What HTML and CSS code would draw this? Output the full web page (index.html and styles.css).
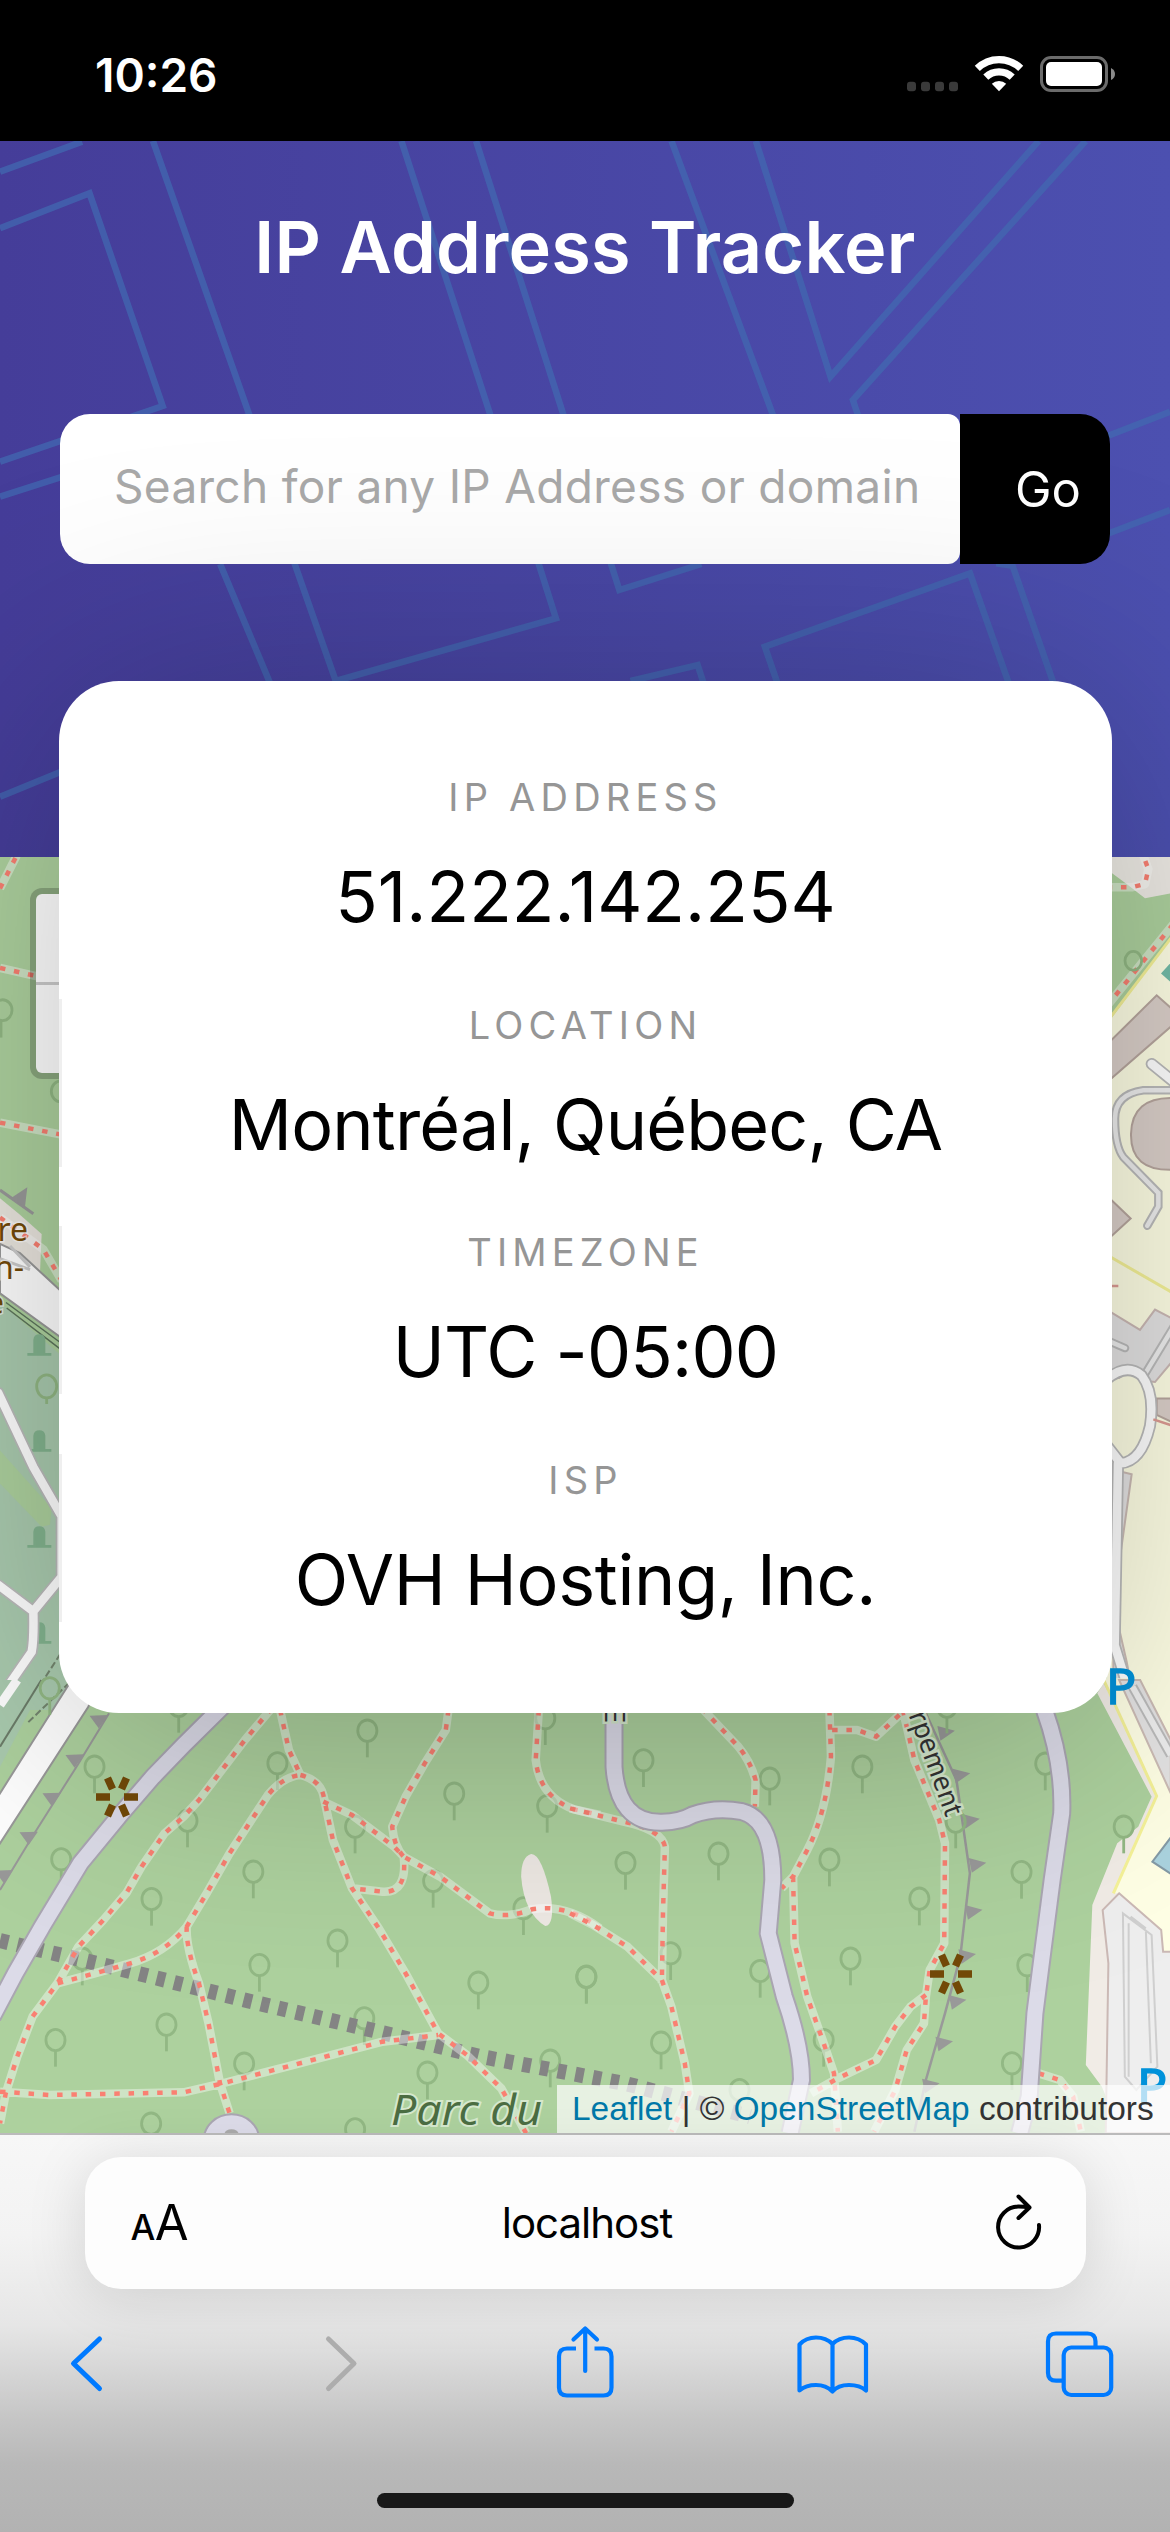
FILE: index.html
```html
<!DOCTYPE html>
<html lang="en">
<head>
<meta charset="utf-8">
<title>IP Address Tracker</title>
<link rel="stylesheet" href="styles.css">
</head>
<body>
<div class="phone">
  <div class="status">
    <span class="time">10:26</span>
    <svg class="status-icons" width="210" height="40" viewBox="906 54 210 40">
      <g fill="#3a3a3a"><rect x="907" y="81.700" width="9" height="9.500" rx="3"/><rect x="921" y="81.700" width="9" height="9.500" rx="3"/><rect x="935" y="81.700" width="9" height="9.500" rx="3"/><rect x="949" y="81.700" width="9" height="9.500" rx="3"/></g>
      <g fill="none" stroke="#fff" stroke-width="7.200"><path d="M977.300 68.400A31 31 0 0 1 1020.700 68.400"/><path d="M985.800 77.200A19 19 0 0 1 1012.200 77.200"/></g>
      <path d="M999 91.200L991.800 83.800A10.500 10.500 0 0 1 1006.200 83.800Z" fill="#fff"/>
      <rect x="1041.500" y="57.500" width="65" height="33" rx="9.500" fill="none" stroke="#6b6b6b" stroke-width="3"/>
      <rect x="1046" y="62" width="56" height="24" rx="5" fill="#fff"/>
      <path d="M1111 68Q1115 70 1115 74T1111 80Z" fill="#8a8a8a"/>
    </svg>
  </div>

  <main class="app">
    <header class="hero">
      <svg class="hero-lines" viewBox="0 423 1568 2148" preserveAspectRatio="none">
        <path d="M0 515L110 425M0 685L120 580L218 1218L0 1385M205 423L335 1250L0 1490M538 423L722 1692L745 1855L450 2043L395 1692L330 1240M638 423L830 1770L940 1692M295 1692L362 2050M900 423L1040 1270M1013 423L1113 1130L1392 423M1455 423L1143 1200L1152 1260M1335 1690L1357 1697L1412 2050M1042 2050L1025 1940L1300 1720L1352 2050M845 2043L935 1995L943 2050M1480 1312L1568 1235M1480 1605L1568 1530M0 2390L85 2312"/>
      </svg>
      <h1>IP Address Tracker</h1>
      <form class="search">
        <div class="field"><span>Search for any IP Address or domain</span></div>
        <button type="button"><span>Go</span></button>
      </form>
    </header>

    <section class="map">
      <svg viewBox="0 857 1170 1276" width="1170" height="1276">
        <defs>
          <g id="tree"><ellipse rx="25" ry="32"/><path d="M0 32V80"/></g>
          <path id="tooth" d="M-24 -18L24 -20L0 20Z"/>
          <path id="flag" d="M-20 -22L26 -8L-12 22Z"/>
          <path id="tomb" d="M-36 17V12H-18V-12Q-16 -22 0 -22T18 -12V12H36V17Z"/>
          <g id="spring"><path d="M-21 0H-7M7 0H21M-9.500 -19L-4.500 -8M9.500 -19L4.500 -8M-9.500 19L-4.500 8M9.500 19L4.500 8" stroke="#734a08" stroke-width="7.500"/></g>
        </defs>
        <rect y="857" width="1170" height="1276" fill="#add19e"/>

        <g class="tile" transform="translate(0 850) scale(.33333 .5485)">
          <defs>
            <path id="lane-w" d="M-5 990L100 1125L185 1215V1325L100 1388L-5 1340M100 1388Q102 1440 95 1462L-5 1550"/>
            <path id="foot-w" d="M0 70L50 10M0 215L95 228L185 240M0 497L185 519M0 670L130 728L185 785"/>
          </defs>
          <path d="M0 810L200 915V1568H0Z" fill="#aacbaf"/>
          <path d="M0 1095L155 1200L150 1230L125 1234L0 1155Z" fill="#add19e"/>
          <path d="M0 805L190 890V925L0 825Z" fill="#add19e"/>
          <path d="M0 635L60 665L125 700L120 770L0 740Z" fill="#eae6df"/>
          <path d="M0 718L60 735L190 808V892L0 808Z" fill="#fff" stroke="#999" stroke-width="2"/>
          <path d="M0 745L90 765M30 722L90 760" stroke="#ccc" stroke-width="3"/>
          <path d="M18 825L190 902M20 835L190 914" stroke="#5d755c" stroke-width="1.500"/>
          <g class="tombs"><use href="#tomb" x="118" y="905"/><use href="#tomb" x="118" y="1080"/><use href="#tomb" x="118" y="1255"/><use href="#tomb" x="118" y="1430"/></g>
          <use href="#lane-w" class="casing"/><use href="#lane-w" class="lane"/>
          <path d="M72 1568L185 1462M85 1590L205 1520" stroke="#73856e" stroke-width="2" stroke-dasharray="7 3"/>
          <use href="#foot-w" class="foot"/><use href="#foot-w" class="dots"/>
          <path d="M0 620L100 663" stroke="#999" stroke-width="3"/><path d="M30 636L82 615L75 650Z" fill="#999"/>
          <g class="trees"><ellipse cx="140" cy="978" rx="30" ry="21"/><path d="M140 999V1010"/><ellipse cx="8" cy="292" rx="28" ry="19"/><path d="M3 311V342"/><ellipse cx="182" cy="440" rx="28" ry="19"/></g>
        </g>
        <g class="place" text-anchor="end"><text x="28" y="1241">re</text><text x="24" y="1279">n-</text><text x="4" y="1314">e</text></g>

        <g class="tile" transform="translate(1060 850) scale(.33333 .5485)">
          <defs>
            <path id="foot-e" d="M140 68H215L255 62L265 35L250 10M140 285L340 135"/>
            <path id="lane-e" d="M340 438H250Q165 445 165 490Q165 540 190 560L295 625V650L262 685M250 960L340 870M145 895L195 908"/>
            <path id="drive-e" d="M275 390L340 422M140 965Q200 935 245 958Q285 990 270 1050Q245 1115 182 1118L140 1085M174 1118L164 1450L235 1590"/>
          </defs>
          <path d="M140 0H340V1568H140Z" fill="#ffffe5"/>
          <path d="M140 0H340V155L140 318Z" fill="#add19e"/>
          <path d="M140 0H340V78L255 88L200 62L140 35Z" fill="#eeebe5"/>
          <path d="M140 314L340 155M140 738L340 808" stroke="#f5f298" stroke-width="3"/>
          <use href="#foot-e" class="foot"/><use href="#foot-e" class="dots"/>
          <g class="trees"><ellipse cx="220" cy="202" rx="25" ry="17"/></g>
          <g fill="#dbd0ca" stroke="#b8a79f" stroke-width="2"><path d="M140 355L290 265L340 292V318L140 424Z"/><path d="M340 452Q215 450 213 518T340 583Z"/><path d="M140 630L212 672L140 712Z"/><path d="M290 1000H340V1044L290 1030Z"/></g>
          <path d="M140 838L240 875L285 838L340 855V930L285 970L140 960Z" fill="#e4e3e3" stroke="#cbb9b5" stroke-width="2"/>
          <path d="M160 1130L215 1138L180 1290L170 1400L200 1480L235 1590H160Z" fill="#e4e3e3" stroke="#ccbcb5" stroke-width="2"/>
          <ellipse cx="205" cy="1035" rx="62" ry="78" fill="#ffffe5"/>
          <use href="#lane-e" class="casing thin"/><use href="#lane-e" class="lane thin"/>
          <use href="#drive-e" class="casing"/><use href="#drive-e" class="lane"/>
          <path d="M340 200L303 225L340 245Z" fill="#73bca8"/><path d="M145 795H175M280 1038L340 1050" stroke="#dd9c94" stroke-width="2.500"/>
        </g>

        <g class="tile" transform="translate(0 1680) scale(.38265 .33333)">
          <defs>
            <path id="foot-sw" d="M710 85L640 180L600 240L520 360L480 410L430 460L370 560L330 640L270 720L205 800L150 910L85 1010L45 1130L15 1240L0 1330M732 90L755 210L785 285Q740 290 700 345L600 520L540 640L488 740Q430 820 340 850T150 910M785 285Q835 300 845 345L870 480L920 625L990 745L1060 880L1145 1060L1220 1125L1310 1225L1375 1360M845 365L920 405L1030 500L1055 530L1150 590L1280 700Q1330 715 1390 688Q1480 670 1568 745M1172 90L1165 150L1110 250L1060 350L1025 440Q1030 500 1055 530Q1065 640 1000 635L920 625M488 740Q485 800 520 910L545 1030L575 1210L600 1300M0 1235L130 1245L480 1237L575 1212L750 1160L1000 1085L1145 1065M1408 90L1400 240Q1410 350 1500 388L1568 405"/>
            <path id="road-sw" d="M590 70L480 195L400 290L310 410L210 550L110 740L40 880L-20 1010"/>
          </defs>
          <path d="M0 0H120L0 260Z" fill="#aacbaf"/>
          <path d="M108 0L0 200" stroke="#6c7c69" stroke-width="2"/><path d="M45 0L0 75" stroke="#fff" stroke-width="9"/>
          <path d="M190 -5L240 60L230 82L-10 508V358Z" fill="#fff" stroke="#999" stroke-width="2"/>
          <path d="M285 100L200 260L90 460L0 630" stroke="#999" stroke-width="2"/>
          <g fill="#999"><use href="#tooth" x="258" y="125"/><use href="#tooth" x="195" y="243"/><use href="#tooth" x="135" y="358"/><use href="#tooth" x="75" y="475"/><use href="#tooth" x="10" y="590"/></g>
          <g class="trees"><use href="#tree" x="130" y="25"/><use href="#tree" x="467" y="78"/><use href="#tree" x="960" y="152"/><use href="#tree" x="725" y="250"/><use href="#tree" x="1187" y="341"/><use href="#tree" x="247" y="260"/><use href="#tree" x="490" y="422"/><use href="#tree" x="928" y="440"/><use href="#tree" x="1430" y="378"/><use href="#tree" x="1425" y="115"/><use href="#tree" x="160" y="538"/><use href="#tree" x="662" y="575"/><use href="#tree" x="396" y="657"/><use href="#tree" x="1132" y="603"/><use href="#tree" x="1368" y="685"/><use href="#tree" x="882" y="782"/><use href="#tree" x="678" y="855"/><use href="#tree" x="1250" y="908"/><use href="#tree" x="1532" y="891"/><use href="#tree" x="435" y="1034"/><use href="#tree" x="145" y="1080"/><use href="#tree" x="638" y="1151"/><use href="#tree" x="952" y="1015"/><use href="#tree" x="1117" y="1178"/><use href="#tree" x="1438" y="1142"/><use href="#tree" x="395" y="1331"/><use href="#tree" x="928" y="1348"/><use href="#tree" x="215" y="836"/></g>
          <path d="M0 782L300 863L650 963L1000 1058L1250 1128L1640 1212L1960 1310" stroke="#848484" stroke-width="15" stroke-dasharray="8.500 9.400"/>
          <path d="M1388 522Q1415 520 1440 650Q1450 735 1425 738Q1370 700 1362 590Q1362 530 1388 522Z" fill="#eee9e4"/>
          <use href="#foot-sw" class="foot"/><use href="#foot-sw" class="dots"/>
          <use href="#road-sw" class="road"/><use href="#road-sw" class="road fill"/>
          <ellipse cx="605" cy="1378" rx="72" ry="75" fill="#dcdbe8" stroke="#aaa6b2" stroke-width="2"/><ellipse cx="605" cy="1360" rx="18" ry="12" fill="#aaa"/>
        </g>

        <g class="tile" transform="translate(570 1680) scale(.38265 .33333)">
          <defs>
            <path id="foot-se" d="M345 85L440 200Q470 240 485 300L483 380M0 385L140 425Q240 450 248 500L243 700L240 910M0 700L60 735L150 800L240 900L265 980L300 1150L312 1240L265 1355M678 90L682 230Q670 400 620 510L583 590L553 625M583 590L587 790L620 950L660 1080L690 1180L700 1355M685 150L750 150L800 170L865 100M870 90L900 240L965 420L980 490L978 790L940 870L930 950L925 1030L880 1110L850 1230L795 1355M930 945L890 980L850 1040L800 1140L700 1195L630 1240M1225 1180L1280 1200L1315 1250L1335 1355"/>
            <path id="road-se" d="M115 90V260Q125 430 240 427Q290 425 320 405Q380 380 450 395Q530 420 530 600L518 760L560 950Q605 1100 605 1200L575 1360M1240 90Q1290 250 1285 400L1260 600L1235 820L1215 1000L1200 1250L1175 1360"/>
          </defs>
          <path d="M1378 40L1395 10L1535 350L1432 640L1550 760V1360H1440L1390 1220L1348 1155L1365 675L1430 490L1485 440L1520 350Z" fill="#f1ece6"/>
          <path d="M1395 -5H1570V815H1550L1545 750L1435 640H1420L1533 348Z" fill="#ffffe5"/>
          <path d="M1395 0L1533 348L1420 640" stroke="#f5f298" stroke-width="3"/>
          <path d="M1435 0H1490L1570 180V340Z" fill="#e4e3e3" stroke="#ccbcb5" stroke-width="2"/><path d="M1470 20L1570 225" stroke="#bbb" stroke-width="10"/><path d="M1470 20L1570 225" stroke="#eee" stroke-width="6"/>
          <path d="M1435 640L1545 750L1550 815H1575V1360H1400L1407 850L1392 690Z" fill="#eee" stroke="#cbb9b5" stroke-width="2"/>
          <path d="M1445 700L1520 765L1535 1160L1480 1230L1450 1190ZM1460 730V1190M1505 755L1518 1150M1465 710L1505 745" stroke="#cfcfcf" stroke-width="2"/>
          <path d="M1575 465L1522 545L1575 585Z" fill="#aad3df" stroke="#849aa6" stroke-width="2"/>
          <path d="M930 100L1010 300L1045 580L1020 830L980 1000L930 1200L900 1355" stroke="#999" stroke-width="2.500"/>
          <g fill="#999"><use href="#flag" x="980" y="160"/><use href="#flag" x="1020" y="288"/><use href="#flag" x="1045" y="424"/><use href="#flag" x="1062" y="556"/><use href="#flag" x="1052" y="697"/><use href="#flag" x="1035" y="830"/><use href="#flag" x="1010" y="967"/><use href="#flag" x="975" y="1092"/><use href="#flag" x="940" y="1218"/></g>
          <g class="trees"><use href="#tree" x="192" y="241"/><use href="#tree" x="522" y="296"/><use href="#tree" x="764" y="260"/><use href="#tree" x="985" y="80"/><use href="#tree" x="145" y="549"/><use href="#tree" x="388" y="521"/><use href="#tree" x="678" y="539"/><use href="#tree" x="913" y="656"/><use href="#tree" x="1180" y="576"/><use href="#tree" x="733" y="836"/><use href="#tree" x="263" y="820"/><use href="#tree" x="497" y="873"/><use href="#tree" x="43" y="890"/><use href="#tree" x="238" y="1088"/><use href="#tree" x="663" y="1080"/><use href="#tree" x="1242" y="251"/><use href="#tree" x="1447" y="440"/><use href="#tree" x="1195" y="856"/><use href="#tree" x="1155" y="1150"/><use href="#tree" x="1008" y="425"/><use href="#tree" x="443" y="1230"/></g>
          <use href="#foot-se" class="foot"/><use href="#foot-se" class="dots"/>
          <use href="#road-se" class="road"/><use href="#road-se" class="road fill"/>
        </g>
        <use href="#spring" x="117" y="1797"/><use href="#spring" x="951" y="1974"/>
        <text class="park" x="391" y="2125" textLength="151" lengthAdjust="spacingAndGlyphs">Parc du</text>
        <g class="street"><text transform="translate(946 1818) rotate(70)" text-anchor="end">Escarpement</text><text transform="translate(605 1723) rotate(90)" text-anchor="end">E</text></g>
        <g class="parking"><text x="1106" y="1704">P</text><text x="1137" y="2104">P</text></g>
      </svg>
      <div class="zoom"><i></i><i></i></div>
      <div class="credit"><a>Leaflet</a> | © <a>OpenStreetMap</a> contributors</div>
    </section>

    <dl class="card">
      <div><dt>IP ADDRESS</dt><dd>51.222.142.254</dd></div>
      <div class="ruled"><dt>LOCATION</dt><dd class="tight">Montréal, Québec, CA</dd></div>
      <div class="ruled"><dt>TIMEZONE</dt><dd class="tight">UTC -05:00</dd></div>
      <div class="ruled"><dt>ISP</dt><dd class="snug">OVH Hosting, Inc.</dd></div>
    </dl>
  </main>

  <footer class="browser">
    <div class="url">
      <span class="aa"><small>A</small>A</span>
      <span class="host">localhost</span>
      <svg width="50" height="60" viewBox="995 2193 50 60" fill="none" stroke="#000" stroke-width="4" stroke-linecap="round" stroke-linejoin="round"><path d="M1040 2225A20.500 20.500 0 1 1 1019.500 2206.500Q1025 2206.500 1030 2207.500M1019.500 2196.500L1030.500 2207.500L1019.500 2218"/></svg>
    </div>
    <svg class="tools" width="1170" height="90" viewBox="0 2320 1170 90" fill="none" stroke="#007aff" stroke-width="4.200" stroke-linecap="round" stroke-linejoin="round">
      <path stroke-width="5" d="M99.500 2339L73.500 2363.500L99.500 2388.500"/>
      <path stroke-width="5" stroke="#adadad" d="M328.500 2339L354 2363.500L328.500 2388.500"/>
      <path stroke-linecap="butt" d="M576 2348.500H567Q559 2348.500 559 2356.500V2387.500Q559 2395.500 567 2395.500H603.500Q611.500 2395.500 611.500 2387.500V2356.500Q611.500 2348.500 603.500 2348.500H594.500"/>
      <path d="M585.200 2371V2328.500M573.500 2339.500L585.200 2328.500L597 2339.500"/>
      <path d="M832.500 2344Q826 2337.500 816 2337.500T799.500 2344.500V2390.500Q806 2385 816 2385T832.500 2391.500Q838 2385 849 2385T866 2390.500V2344.500Q859 2337.500 849 2337.500T832.500 2344V2391"/>
      <path stroke-linecap="butt" d="M1062 2380.700H1056Q1048 2380.700 1048 2372.700V2341.500Q1048 2333.500 1056 2333.500H1087.500Q1095.500 2333.500 1095.500 2341.500V2347"/>
      <rect x="1063.700" y="2347.500" width="47.500" height="47.500" rx="7.500"/>
    </svg>
    <div class="home"></div>
  </footer>
</div>
</body>
</html>
```
FILE: styles.css
```css
* { box-sizing: border-box; }
body { margin: 0; font-family: Inter, "Liberation Sans", sans-serif; background: #000; }
.phone { width: 1170px; height: 2532px; display: flex; flex-direction: column; overflow: hidden; }

.status { height: 141px; background: #000; color: #fff; display: flex; justify-content: space-between; padding: 54px 54px 0 95px; }
.time { font-size: 46px; line-height: 42px; font-weight: 600; }

.app { position: relative; height: 1992px; }
.hero { position: relative; height: 716px; padding: 0 60px; background: linear-gradient(to right, #453d99, #4c50b0); }
.hero-lines { position: absolute; inset: 0; width: 100%; height: 100%; fill: none; stroke: #4268b0; stroke-opacity: .75; }
.hero-lines path { vector-effect: non-scaling-stroke; stroke-width: 6.500px; }
.hero h1 { position: relative; margin: 0; padding-top: 61px; height: 273px; line-height: 90px; font-size: 72px; font-weight: 600; letter-spacing: .2px; color: #fff; text-align: center; white-space: nowrap; }
.search { position: relative; display: flex; height: 150px; }
.field { width: 900px; background: #fff; border-radius: 30px 12px 12px 30px; padding-left: 54px; line-height: 145px; font-size: 46px; letter-spacing: .3px; color: #a9a9a9; white-space: nowrap; }
.search button { width: 150px; border: 0; padding: 0 0 0 26px; background: #000; color: #fff; border-radius: 0 30px 30px 0; font: 400 49px Inter, sans-serif; }

.map { position: relative; height: 1276px; }
.map > svg { display: block; }
.tile path, .tile ellipse, #tree path, #tree ellipse { vector-effect: non-scaling-stroke; }
.tile { fill: none; }
.foot { stroke: #fff; stroke-opacity: .4; stroke-width: 8.500px; stroke-linejoin: round; }
.dots { stroke: #fa8072; stroke-width: 4.500px; stroke-dasharray: 5.500 8.800; }
.trees { fill: none; stroke: #92b884; stroke-width: 2.800px; }
.tombs { fill: #83b48f; }
.road { stroke: #aaa6b2; stroke-width: 19px; }
.road.fill { stroke: #dcdbe8; stroke-width: 15px; }
.casing { stroke: #bbb; stroke-width: 12px; stroke-linecap: round; }
.lane { stroke: #fff; stroke-width: 8.500px; stroke-linecap: round; }
.casing.thin { stroke-width: 8.500px; }
.lane.thin { stroke: #eee; stroke-width: 4.500px; }
.place { font: 32px "Noto Sans", sans-serif; fill: #734a08; stroke: #fff; stroke-opacity: .6; stroke-width: 3px; paint-order: stroke; }
.park { font: italic 42px "Noto Sans", sans-serif; fill: #4b6d42; stroke: #d5e8cd; stroke-width: 4px; paint-order: stroke; }
.street { font: 27px "Noto Sans", sans-serif; fill: #333; stroke: #d5e8cd; stroke-width: 5px; paint-order: stroke; }
.parking { font: 50px "Noto Sans", sans-serif; fill: #0092da; stroke: #0092da; stroke-width: 1.500px; }
.zoom { position: absolute; left: 30px; top: 31px; width: 102px; height: 191px; border: 6px solid rgba(0,0,0,.2); border-radius: 12px; background: #fff; background-clip: padding-box; display: flex; flex-direction: column; }
.zoom i { flex: 1; }
.zoom i + i { border-top: 3px solid #ccc; }
.credit { position: absolute; right: 0; bottom: 0; height: 48px; width: 613px; padding-left: 15px; background: rgba(255,255,255,.7); font: 33.450px/47px "Liberation Sans", sans-serif; color: #333; white-space: nowrap; }
.credit a { color: #0078a8; }

.card { position: absolute; left: 59px; top: 540px; width: 1053px; height: 1032px; margin: 0; padding-top: 90px; background: #fff; border-radius: 60px; box-shadow: 0 24px 300px rgba(0,0,0,.25); text-align: center; color: #000; }
.card > div { height: 227.700px; padding-top: 1px; }
.ruled { background: linear-gradient(#efefef, #efefef) 0 0 / 3px 168px no-repeat; }
.card dt { font-size: 38px; line-height: 50px; letter-spacing: 5.200px; color: #969696; }
.card dd { margin: 32px 0 0; font-size: 70px; line-height: 86px; white-space: nowrap; }
.card .tight { letter-spacing: -.800px; }
.card .snug { letter-spacing: -.300px; }

.browser { position: relative; height: 399px; border-top: 2px solid #bbb; background: linear-gradient(#f7f7f7 0, #f3f3f3 100px, #e6e6e6 190px, #c5c5c5 285px, #b8b8b8 330px, #b2b2b2 399px); display: flex; flex-direction: column; align-items: center; }
.url { margin-top: 22px; width: 1001px; height: 132px; flex: none; border-radius: 36px; background: #fdfdfd; box-shadow: 0 6px 60px rgba(0,0,0,.13); display: grid; grid-template-columns: 140px 1fr 140px; padding: 0 42px 0 46px; }
.aa { font-size: 49px; line-height: 132px; letter-spacing: -.500px; }
.aa small { font-size: 35px; font-weight: 500; }
.host { font-size: 42px; line-height: 132px; letter-spacing: -1px; text-align: center; }
.url svg { justify-self: end; margin-top: 36px; }
.tools { flex: none; margin-top: 31px; }
.home { width: 417px; height: 15px; border-radius: 8px; background: #181818; margin-top: 83px; }
```
